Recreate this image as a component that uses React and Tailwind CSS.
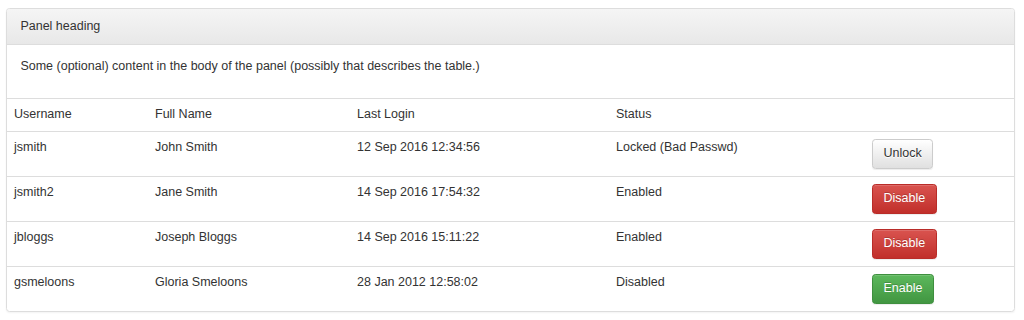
import React from "react";

const rows = [
  { u: "jsmith", n: "John Smith", l: "12 Sep 2016 12:34:56", s: "Locked (Bad Passwd)", b: "Unlock", t: "default" },
  { u: "jsmith2", n: "Jane Smith", l: "14 Sep 2016 17:54:32", s: "Enabled", b: "Disable", t: "danger" },
  { u: "jbloggs", n: "Joseph Bloggs", l: "14 Sep 2016 15:11:22", s: "Enabled", b: "Disable", t: "danger" },
  { u: "gsmeloons", n: "Gloria Smeloons", l: "28 Jan 2012 12:58:02", s: "Disabled", b: "Enable", t: "success" },
];

function Btn({ t, children }) {
  const base =
    "inline-block h-[30px] px-[10.5px] rounded-[3.5px] border text-[12.5px] leading-[17.8px] shadow-[inset_0_1px_0_rgba(255,255,255,0.15),0_1px_1px_rgba(0,0,0,0.075)]";
  if (t === "default")
    return (
      <button className={base + " text-[#333] border-[#ccc] bg-gradient-to-b from-white to-[#e0e0e0] [text-shadow:0_1px_0_#fff]"}>
        {children}
      </button>
    );
  if (t === "danger")
    return (
      <button className={base + " text-white border-[#b92c28] bg-gradient-to-b from-[#d9534f] to-[#c12e2a] [text-shadow:0_-1px_0_rgba(0,0,0,0.2)]"}>
        {children}
      </button>
    );
  return (
    <button className={base + " text-white border-[#3e8f3e] bg-gradient-to-b from-[#5cb85c] to-[#419641] [text-shadow:0_-1px_0_rgba(0,0,0,0.2)]"}>
      {children}
    </button>
  );
}

export default function App() {
  return (
    <div className="bg-white pt-[8px] pl-[6px] pr-[9px] pb-[8px] text-[#333] text-[12.5px] leading-[17.8px]" style={{ fontFamily: '"Liberation Sans", Arial, sans-serif' }}>
      <div className="border border-[#ddd] rounded-[3.5px] overflow-hidden shadow-[0_1px_2px_rgba(0,0,0,0.05)]">
        <div className="px-[13.4px] pt-[8.9px] pb-[8.6px] border-b border-[#ddd] bg-gradient-to-b from-[#f5f5f5] to-[#e8e8e8]">
          Panel heading
        </div>
        <div className="px-[13.4px] pt-[13.2px] pb-[13px]">
          <p className="mb-[8.5px]">Some (optional) content in the body of the panel (possibly that describes the table.)</p>
        </div>
        <table className="w-full table-fixed border-collapse">
          <thead>
            <tr className="border-t border-[#ddd]">
              <th className="w-[141px] text-left font-normal p-[7px] align-top">Username</th>
              <th className="w-[202px] text-left font-normal p-[7px] align-top">Full Name</th>
              <th className="w-[259px] text-left font-normal p-[7px] align-top">Last Login</th>
              <th className="w-[256px] text-left font-normal p-[7px] align-top">Status</th>
              <th className="text-left font-normal p-[7px] align-top"></th>
            </tr>
          </thead>
          <tbody>
            {rows.map((r) => (
              <tr key={r.u} className="border-t border-[#ddd]">
                <td className="px-[7px] pt-[7px] pb-[7px] align-top">{r.u}</td>
                <td className="px-[7px] pt-[7px] pb-[7px] align-top">{r.n}</td>
                <td className="px-[7px] pt-[7px] pb-[7px] align-top">{r.l}</td>
                <td className="px-[7px] pt-[7px] pb-[7px] align-top">{r.s}</td>
                <td className="px-[7px] pt-[7px] pb-[7px] align-top h-[44px]">
                  <Btn t={r.t}>{r.b}</Btn>
                </td>
              </tr>
            ))}
          </tbody>
        </table>
      </div>
    </div>
  );
}
